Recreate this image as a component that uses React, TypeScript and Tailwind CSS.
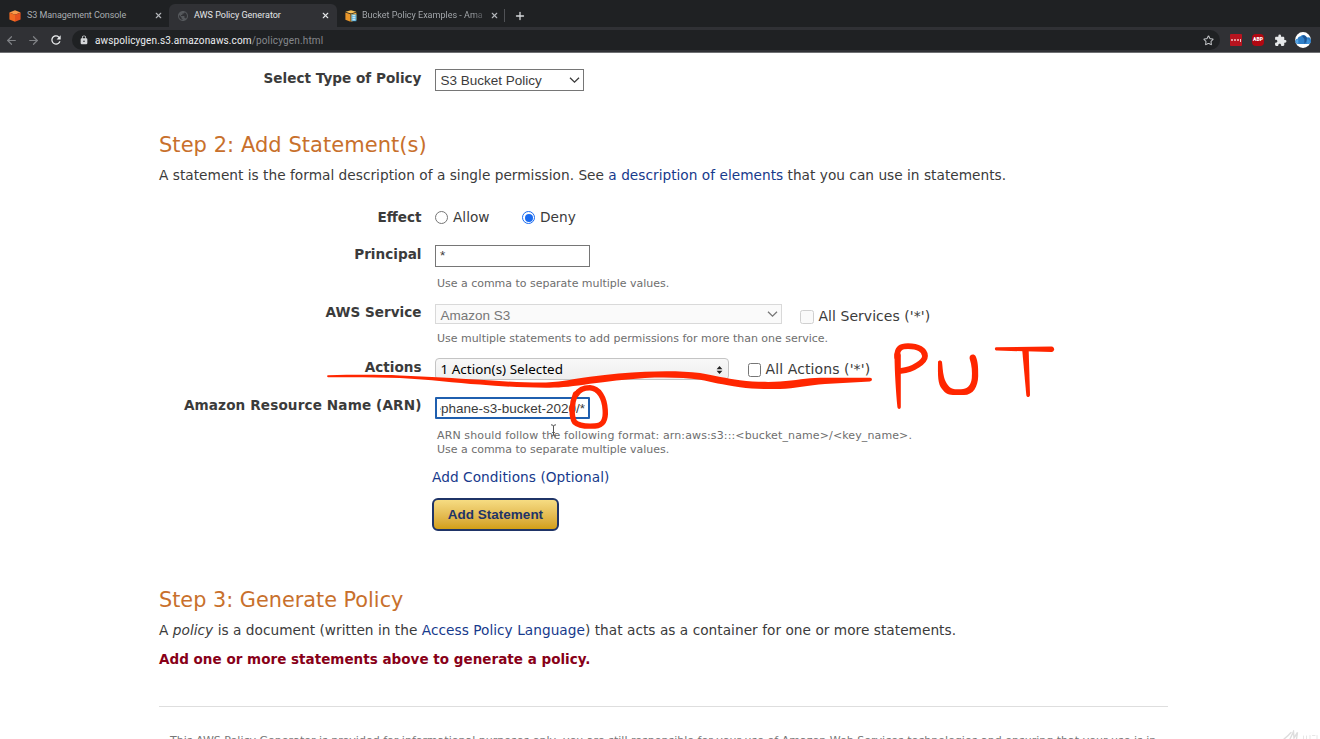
import type { ReactNode } from "react";
import { ArrowLeft, ArrowRight, Plus, Star, X } from "lucide-react";
import { MdExtension, MdLock, MdPublic, MdRefresh } from "react-icons/md";

const CubeIcon = () => (
  <svg className="size-[12px] shrink-0" viewBox="0 0 12 12">
    <path d="M6 .2 11.6 2.4 6 4.8.4 2.4Z" fill="#f79a4b" />
    <path d="M.4 2.4 6 4.8v7L.4 9.6Z" fill="#f26a21" />
    <path d="M11.6 2.4 6 4.8v7l5.6-2.2Z" fill="#e4521f" />
  </svg>
);

const DocsIcon = () => (
  <svg className="size-[12px] shrink-0" viewBox="0 0 12 12">
    <path d="M6 .2 11.4 1.8 6 3.6.4 1.8Z" fill="#f6c15a" />
    <path d="M.4 2.4 5.6 4.2v7.6L.4 9.8Z" fill="#e8962a" />
    <path d="M11.4 2.4 6.2 4.2v7.6l5.2-2Z" fill="#f0a93a" />
    <path d="M6.4 4.4h5v6.8h-5Z" fill="#4aa8d8" />
    <path d="M7.4 5.8h3M7.4 7.8h3M7.4 9.8h3" stroke="#fff" strokeWidth="1" />
  </svg>
);

const CloudAvatar = () => (
  <svg className="size-4" viewBox="0 0 16 16">
    <circle cx="8" cy="8" r="7.9" fill="#fff" />
    <path d="M3 12A2.6 2.6 0 0 1 2.6 6.8 3 3 0 0 1 5.6 4.3 3.5 3.5 0 0 1 11.8 5.6a3 3 0 0 1 2 6.4Z" fill="#2f7fc8" />
    <path d="M7 3.9A3.5 3.5 0 0 1 11.8 5.6V9L9.4 12V7Z" fill="#1d5596" />
    <path d="M11.8 7.4a3 3 0 0 1 3.2 2 2.1 2.1 0 0 1-1.6 2.6h-1.6Z" fill="#3f93da" />
    <path d="M.9 9.6a2.6 2.6 0 0 1 2.4-2.6V12a2.5 2.5 0 0 1-2.4-2.4Z" fill="#5aa9e6" />
  </svg>
);

function TabStrip() {
  return (
    <div className="flex h-[27px] bg-[#1f2123] pt-1 text-[9px] text-[#a9adb1]">
      <div className="flex w-[169px] items-center pl-[9px] pr-[6px]">
        <CubeIcon />
        <span className="ml-[6px] flex-1 tracking-[-0.07px]">S3 Management Console</span>
        <X className="size-[9px] text-[#b4b7ba]" strokeWidth={3} />
      </div>
      <div className="flex w-[168px] items-center rounded-t-[6px] bg-[#303135] pl-[8px] pr-[7px] text-[#e4e6e8]">
        <MdPublic className="size-[12px] text-[#55585c]" />
        <span className="ml-[5px] flex-1">AWS Policy Generator</span>
        <X className="size-[9px] text-[#e4e6e8]" strokeWidth={3} />
      </div>
      <div className="flex w-[167px] items-center pl-[8px] pr-[5px]">
        <DocsIcon />
        <span className="ml-[5px] mr-[5px] w-[123px] overflow-hidden whitespace-nowrap bg-linear-to-r from-[#a9adb1] from-90% to-[#3a3c3f] bg-clip-text text-transparent">
          Bucket Policy Examples - Ama
        </span>
        <X className="size-[9px] shrink-0 text-[#b4b7ba]" strokeWidth={3} />
      </div>
      <div className="mt-[5px] h-[13px] w-px bg-[#505256]" />
      <div className="flex items-center pl-[9px]">
        <Plus className="size-[12px] text-[#d5d7da]" strokeWidth={2.6} />
      </div>
    </div>
  );
}

function Toolbar() {
  return (
    <div className="flex h-[26px] items-center border-b border-[#6f7073] bg-[#303135] pt-px">
      <ArrowLeft className="ml-[5px] size-[13px] text-[#7f8185]" strokeWidth={2.2} />
      <ArrowRight className="ml-[9px] size-[13px] text-[#7f8185]" strokeWidth={2.2} />
      <MdRefresh className="ml-[9px] size-[14px] text-[#eceef0]" />
      <div className="ml-[9px] flex h-[20px] w-[1148px] items-center rounded-full bg-[#1f2123] pl-[7px] pr-[6px] text-[10px]">
        <MdLock className="size-[10px] text-[#d4d6d8]" />
        <span className="ml-[6px] tracking-[0.13px] text-[#eceef0]">awspolicygen.s3.amazonaws.com</span>
        <span className="flex-1 tracking-[0.16px] text-[#85888c]">/policygen.html</span>
        <Star className="size-[11px] text-[#c3c5c8]" strokeWidth={2.2} />
      </div>
      <div className="ml-[10px] flex h-[12px] w-[12px] items-center justify-center gap-px rounded-[1px] bg-[#b8141f]">
        <i className="size-[2px] rounded-full bg-[#f3c4c6]" />
        <i className="size-[2px] rounded-full bg-[#f3c4c6]" />
        <i className="size-[2px] rounded-full bg-[#f3c4c6]" />
        <i className="h-[3px] w-px bg-[#f3c4c6]" />
      </div>
      <div className="ml-[10px] flex size-[12px] items-center justify-center rounded-[4px] bg-[#b10812] text-[5px] font-black text-white">
        ABP
      </div>
      <MdExtension className="ml-[10px] size-[13px] text-[#e6e8ea]" />
      <div className="ml-[8px]">
        <CloudAvatar />
      </div>
    </div>
  );
}

type RowProps = { label: string; height: string; pad: string; track?: string; children: ReactNode };

function Row({ label, height, pad, track = "", children }: RowProps) {
  return (
    <div className={`flex ${height}`}>
      <div className={`w-[262.5px] shrink-0 whitespace-nowrap text-right text-[13.6px] font-bold leading-4 text-[#3b3b3b] ${pad} ${track}`}>
        {label}
      </div>
      <div className="ml-[13.5px] flex-1">{children}</div>
    </div>
  );
}

const Hint = ({ children }: { children: ReactNode }) => (
  <p className="ml-[2px] text-[11px] leading-[13.5px] tracking-[-0.02px] text-[#6e6e6e]">{children}</p>
);

const Caret = () => (
  <svg className="h-[7px] w-[11px] shrink-0" viewBox="0 0 11 7">
    <path d="M1 .8 5.5 5.2 10 .8" fill="none" stroke="currentColor" strokeWidth="1.3" />
  </svg>
);

const Box = ({ tone }: { tone: string }) => <span className={`size-[13.5px] shrink-0 rounded-[2.5px] border ${tone}`} />;

/* Freehand marker strokes drawn over the form. */
function Marker() {
  return (
    <svg className="pointer-events-none absolute left-0 top-0 h-[739px] w-[1320px]" viewBox="0 0 1320 739" fill="none" stroke="#ff2600" strokeLinecap="round" strokeLinejoin="round">
      <g fill="#ff2600" stroke="none">
        <path d="M328 375.3C355 374.6 380 374.7 400 375.4C430 376.5 455 378.2 480 379.8C505 381.6 525 382.8 546 382.6C565 381.6 575 378.5 590 376.8C610 374.2 628 372.6 645 371.8C665 370.8 685 371.2 700 373C715 375.5 726 378.5 740 380.2C755 382 768 382.2 780 381.6C796 380.6 806 378 820 377.8L870 377.8C872.6 378 872.6 381 870 381.4L825 384C808 385 795 388.5 780 389C765 389.3 752 388.9 740 387.3C722 384.8 712 382 700 379.8C685 377.4 665 377 645 377.9C625 379.2 607 381.5 590 383.8C572 386.5 560 388 546 387.7C522 387.7 500 386.3 480 384.6C455 382.6 430 379.6 400 377.9C380 377.1 355 377.1 328 377.2C326.8 377 326.8 375.5 328 375.3Z" />
        <path d="M894.5 355C894.4 351 900.5 351 900.8 355L900.8 407C900.8 409.5 897.6 409.5 897.4 407C896 392 894.6 372 894.5 355Z" />
        <path d="M938 362C937.8 376 937.8 384 942 389C946 394.2 949 395 955 395H964C973 395 978 387 978.2 376C978.3 367 978 362 975.8 356.5C974 353 969 354.5 969.6 358.5C972 366 972.2 372 971.8 378C971 386 967 389 961 389.2H955C949 388.6 945.6 383 944 377C942.6 371 942.6 366 942 362C941.5 360 938.3 360 938 362Z" />
        <path d="M996 347.2L1051.5 346.4C1055 346.7 1055 351.8 1051.5 352L997 350.6C994.4 350.2 994.4 347.6 996 347.2Z" />
        <path d="M1022.3 351H1028.7L1030 395C1029.6 397.8 1026.6 397.8 1026.3 395Z" />
      </g>
      <path d="M576.5 394.5C579 390 583.5 387.7 590 387.8C599 388.2 604.5 398 605.2 410C606 420 603 425.5 595 426C587 426.5 578 425.5 574.5 422C571.2 416 571.2 404 575.5 394" strokeWidth="5.4" />
      <path d="M897.2 357C896.8 348 901 346.2 908 346.2C918 346.2 925 350 925 356C925 361 914 370 901 370.8" strokeWidth="5.8" />
    </svg>
  );
}

const Cursor = () => (
  <svg className="absolute left-[549px] top-[424px] h-[13px] w-[9px]" viewBox="0 0 9 13" fill="none" stroke="#555">
    <path d="M2 .8Q4.4.8 4.5 2.2Q4.6.8 7 .8M4.5 2V11M2 12.2Q4.4 12.2 4.5 10.8Q4.6 12.2 7 12.2M3.2 8.5H5.8" strokeWidth="1" />
  </svg>
);

const Watermark = () => (
  <svg className="absolute bottom-0 right-0 h-[9px] w-[38px]" viewBox="0 0 38 9" fill="none" stroke="#dedede" strokeLinecap="round">
    <path d="M2 9Q6 6 9 2.5M8 9 11.5 1.5 12 8 15.5 2.5 14.5 9" strokeWidth="1.4" />
    <path d="M21.5 6V9M24.5 6V9M28 5.5V9M30.5 5.5H33M35 5.5V9" stroke="#e6e6e6" />
  </svg>
);

export default function App() {
  return (
    <div className="relative h-[739px] w-[1320px] overflow-hidden bg-white">
      <header className="font-[Roboto,sans-serif]">
        <TabStrip />
        <Toolbar />
      </header>

      <main className="ml-[159px] w-[1009px] font-['DejaVu_Sans',sans-serif] text-[13.7px] leading-4 text-[#3b3b3b]">
        <Row label="Select Type of Policy" height="h-[76px]" pad="pt-[17px]">
          <div className="mt-4 flex h-[22px] w-[149px] items-center justify-between border border-[#767676] pl-[4.5px] pr-[3px] pt-px font-['Liberation_Sans',sans-serif] text-[13.5px]">
            S3 Bucket Policy
            <Caret />
          </div>
        </Row>

        <h2 className="h-[38px] pt-px text-[21px] leading-[30px] tracking-[0.04px] text-[#c8702c]">Step 2: Add Statement(s)</h2>
        <p className="h-[37px] whitespace-nowrap tracking-[0.02px]">
          A statement is the formal description of a single permission. See{" "}
          <a className="text-[#173a8c]">a description of elements</a> that you can use in statements.
        </p>

        <Row label="Effect" height="h-[41px]" pad="pt-[5px]">
          <div className="flex items-center pt-[5px]">
            <span className="mt-px size-[13px] rounded-full border border-[#767676]" />
            <span className="ml-[5px] w-[69px]">Allow</span>
            <span className="mt-px flex size-[13px] items-center justify-center rounded-full border border-[#1a6bf0]">
              <i className="size-[8px] rounded-full bg-[#1a6bf0]" />
            </span>
            <span className="ml-[5px]">Deny</span>
          </div>
        </Row>

        <Row label="Principal" height="h-[59px]" pad="pt-px">
          <div className="mb-[10px] flex h-[22px] w-[155px] items-center border border-[#767676] pl-[4px] font-['Liberation_Sans',sans-serif] text-[13.5px]">
            *
          </div>
          <Hint>Use a comma to separate multiple values.</Hint>
        </Row>

        <Row label="AWS Service" height="h-[54px]" pad="pt-0">
          <div className="mb-[7px] flex h-[21px]">
            <div className="flex h-[20px] w-[347px] items-center justify-between border border-[#d9d9d9] bg-[#fafafa] pl-[4.5px] pr-[3px] font-['Liberation_Sans',sans-serif] text-[13.5px] text-[#777]">
              <span className="pt-[3px]">Amazon S3</span>
              <Caret />
            </div>
            <span className="ml-[18px] mt-[6px] flex">
              <Box tone="border-[#d0d0d0] bg-[#fafafa]" />
            </span>
            <span className="ml-[5px] mt-[4px] text-[14px] tracking-[0.04px]">All Services ('*')</span>
          </div>
          <Hint>Use multiple statements to add permissions for more than one service.</Hint>
        </Row>

        <Row label="Actions" height="h-[39px]" pad="pt-px">
          <div className="flex">
            <div className="flex h-[22px] w-[294px] items-center justify-between rounded-[4px] border border-[#c4c4c4] bg-linear-to-b from-[#f8f8f8] to-[#efefef] pl-[4.5px] pr-[5px] font-['Noto_Sans',sans-serif] text-[13.4px] tracking-[0.04px] text-black">
              1 Action(s) Selected
              <svg className="mt-[2px] h-[8px] w-[7px]" viewBox="0 0 7 8" fill="#222">
                <path d="M3.5 0 6.4 3.3H.6ZM3.5 8 .6 4.7H6.4Z" />
              </svg>
            </div>
            <span className="ml-[18.5px] mt-[5px] flex">
              <Box tone="border-[#767676]" />
            </span>
            <span className="ml-[4.5px] mt-[3px] text-[14px] tracking-[0.1px]">All Actions ('*')</span>
          </div>
        </Row>

        <Row label="Amazon Resource Name (ARN)" height="h-[72px]" pad="pt-0" track="tracking-[0.12px]">
          <div className="mb-[10px] h-[22px] w-[155px] rounded-[1px] border-2 border-[#1f5faf] px-[3px] font-['Liberation_Sans',sans-serif] text-[13.5px]">
            <div className="flex h-full items-center justify-end overflow-hidden whitespace-nowrap pt-px">
              <span>ephane-s3-bucket-2020/*</span>
            </div>
          </div>
          <Hint>
            <span className="tracking-[0.12px]">ARN should follow the following format: arn:aws:s3:::&lt;bucket_name&gt;/&lt;key_name&gt;.</span>
            <br />
            Use a comma to separate multiple values.
          </Hint>
        </Row>

        <div className="ml-[273px] flex h-[115px] flex-col items-start">
          <a className="mb-[13px] tracking-[0.05px] text-[#173a8c]">Add Conditions (Optional)</a>
          <button className="h-[33px] w-[127px] rounded-[6px] border-2 border-[#1f3467] bg-linear-to-b from-[#f6dc82] to-[#d39f12] font-['Liberation_Sans',sans-serif] text-[13.5px] font-bold leading-4 text-[#1f3467]">
            Add Statement
          </button>
        </div>

        <h2 className="h-[38px] pt-px text-[20.8px] leading-[30px] text-[#c8702c]">Step 3: Generate Policy</h2>
        <p className="h-[29px] whitespace-nowrap tracking-[0.03px]">
          A <em>policy</em> is a document (written in the <a className="text-[#173a8c]">Access Policy Language</a>) that acts as a
          container for one or more statements.
        </p>
        <p className="h-[55px] text-[13.5px] font-bold tracking-[0.02px] text-[#880018]">
          Add one or more statements above to generate a policy.
        </p>
        <footer className="border-t border-[#dedede] pl-[11px] pt-[27px] text-[11px] leading-[13px] tracking-[0.01px] text-[#777]">
          <p className="whitespace-nowrap">
            This AWS Policy Generator is provided for informational purposes only, you are still responsible for your use of Amazon
            Web Services technologies and ensuring that your use is in
          </p>
        </footer>
      </main>

      <Marker />
      <Cursor />
      <Watermark />
    </div>
  );
}
